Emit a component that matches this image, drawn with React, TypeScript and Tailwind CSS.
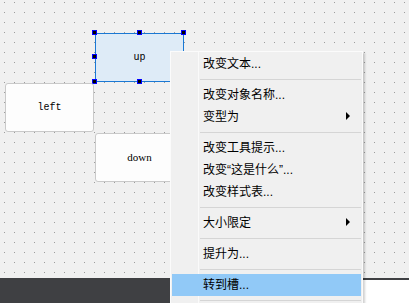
type MenuEntry =
  | { kind: 'item'; label: string; submenu?: boolean; active?: boolean }
  | { kind: 'sep' }

const menu: MenuEntry[] = [
  { kind: 'item', label: '改变文本...' },
  { kind: 'sep' },
  { kind: 'item', label: '改变对象名称...' },
  { kind: 'item', label: '变型为', submenu: true },
  { kind: 'sep' },
  { kind: 'item', label: '改变工具提示...' },
  { kind: 'item', label: '改变“这是什么”...' },
  { kind: 'item', label: '改变样式表...' },
  { kind: 'sep' },
  { kind: 'item', label: '大小限定', submenu: true },
  { kind: 'sep' },
  { kind: 'item', label: '提升为...' },
  { kind: 'sep' },
  { kind: 'item', label: '转到槽...', active: true },
  { kind: 'sep' },
]

function Handle({ className }: { className: string }) {
  return <div className={`absolute w-[5px] h-[5px] bg-black border border-[#0000ff] ${className}`} />
}

function ContextMenu() {
  return (
    <div className="absolute left-[170px] top-[51px] w-[193px] bg-[#f0f0f0] border border-[#fbfbfb] pt-[1px] px-[1px] shadow-[2px_2px_2px_rgba(0,0,0,0.18)] font-['Liberation_Sans','Noto_Sans_CJK_SC',sans-serif] text-[12px] text-black">
      {/* gutter line */}
      <div className="absolute left-[27px] top-0 bottom-0 w-px bg-[#fafafa]" />
      {menu.map((entry, i) =>
        entry.kind === 'sep' ? (
          <div key={i} className="my-[4px] ml-[28px] h-px bg-[#d5d5d5]" />
        ) : (
          <div
            key={i}
            className={`relative flex items-center h-[22px] pl-[31px] pr-[11px] ${entry.active ? 'bg-[#91c9f7]' : ''}`}
          >
            <span className="flex-1 leading-[22px] whitespace-nowrap">{entry.label}</span>
            {entry.submenu && (
              <span className="w-0 h-0 border-l-[4px] border-l-black border-y-[4px] border-y-transparent -mt-[2px]" />
            )}
          </div>
        )
      )}
    </div>
  )
}

export default function App() {
  return (
    <div className="relative w-[409px] h-[303px] overflow-hidden bg-[#f0f0f0]">
      {/* Form canvas */}
      <div className="relative h-[278px] bg-[#f0f0f0] bg-[linear-gradient(90deg,#f0f0f0_9px,transparent_9px),linear-gradient(#f0f0f0_9px,#9c9c9c_9px)] bg-[length:10px_10px] bg-[position:5px_3px]">
        {/* up (selected) */}
        <div className="absolute left-[95px] top-[33px] w-[89px] h-[49px] bg-[#deebf7] border border-[#1a78d4] flex items-center justify-center font-['Liberation_Mono',monospace] text-[10px] text-black">
          up
          <Handle className="-left-[4px] -top-[4px]" />
          <Handle className="left-[41px] -top-[4px]" />
          <Handle className="-right-[3px] -top-[4px]" />
          <Handle className="-left-[4px] top-[20px]" />
          <Handle className="-left-[4px] -bottom-[3px]" />
          <Handle className="left-[41px] -bottom-[3px]" />
        </div>

        {/* left */}
        <div className="absolute left-[5px] top-[83px] w-[89px] h-[49px] bg-[#fdfdfd] border border-[#c9c9c9] rounded-[3px] flex items-center justify-center font-['Liberation_Mono',monospace] text-[10px] text-black">
          left
        </div>

        {/* down */}
        <div className="absolute left-[95px] top-[133px] w-[89px] h-[49px] bg-[#fdfdfd] border border-[#c9c9c9] rounded-[3px] flex items-center justify-center font-['Liberation_Serif',serif] text-[11px] text-black">
          down
        </div>
      </div>

      {/* bottom panels */}
      <div className="flex h-[25px]">
        <div className="w-[260px] bg-[#3f4043]" />
        <div className="flex-1 bg-white border-t-2 border-[#3f4043]" />
      </div>

      <ContextMenu />
    </div>
  )
}
